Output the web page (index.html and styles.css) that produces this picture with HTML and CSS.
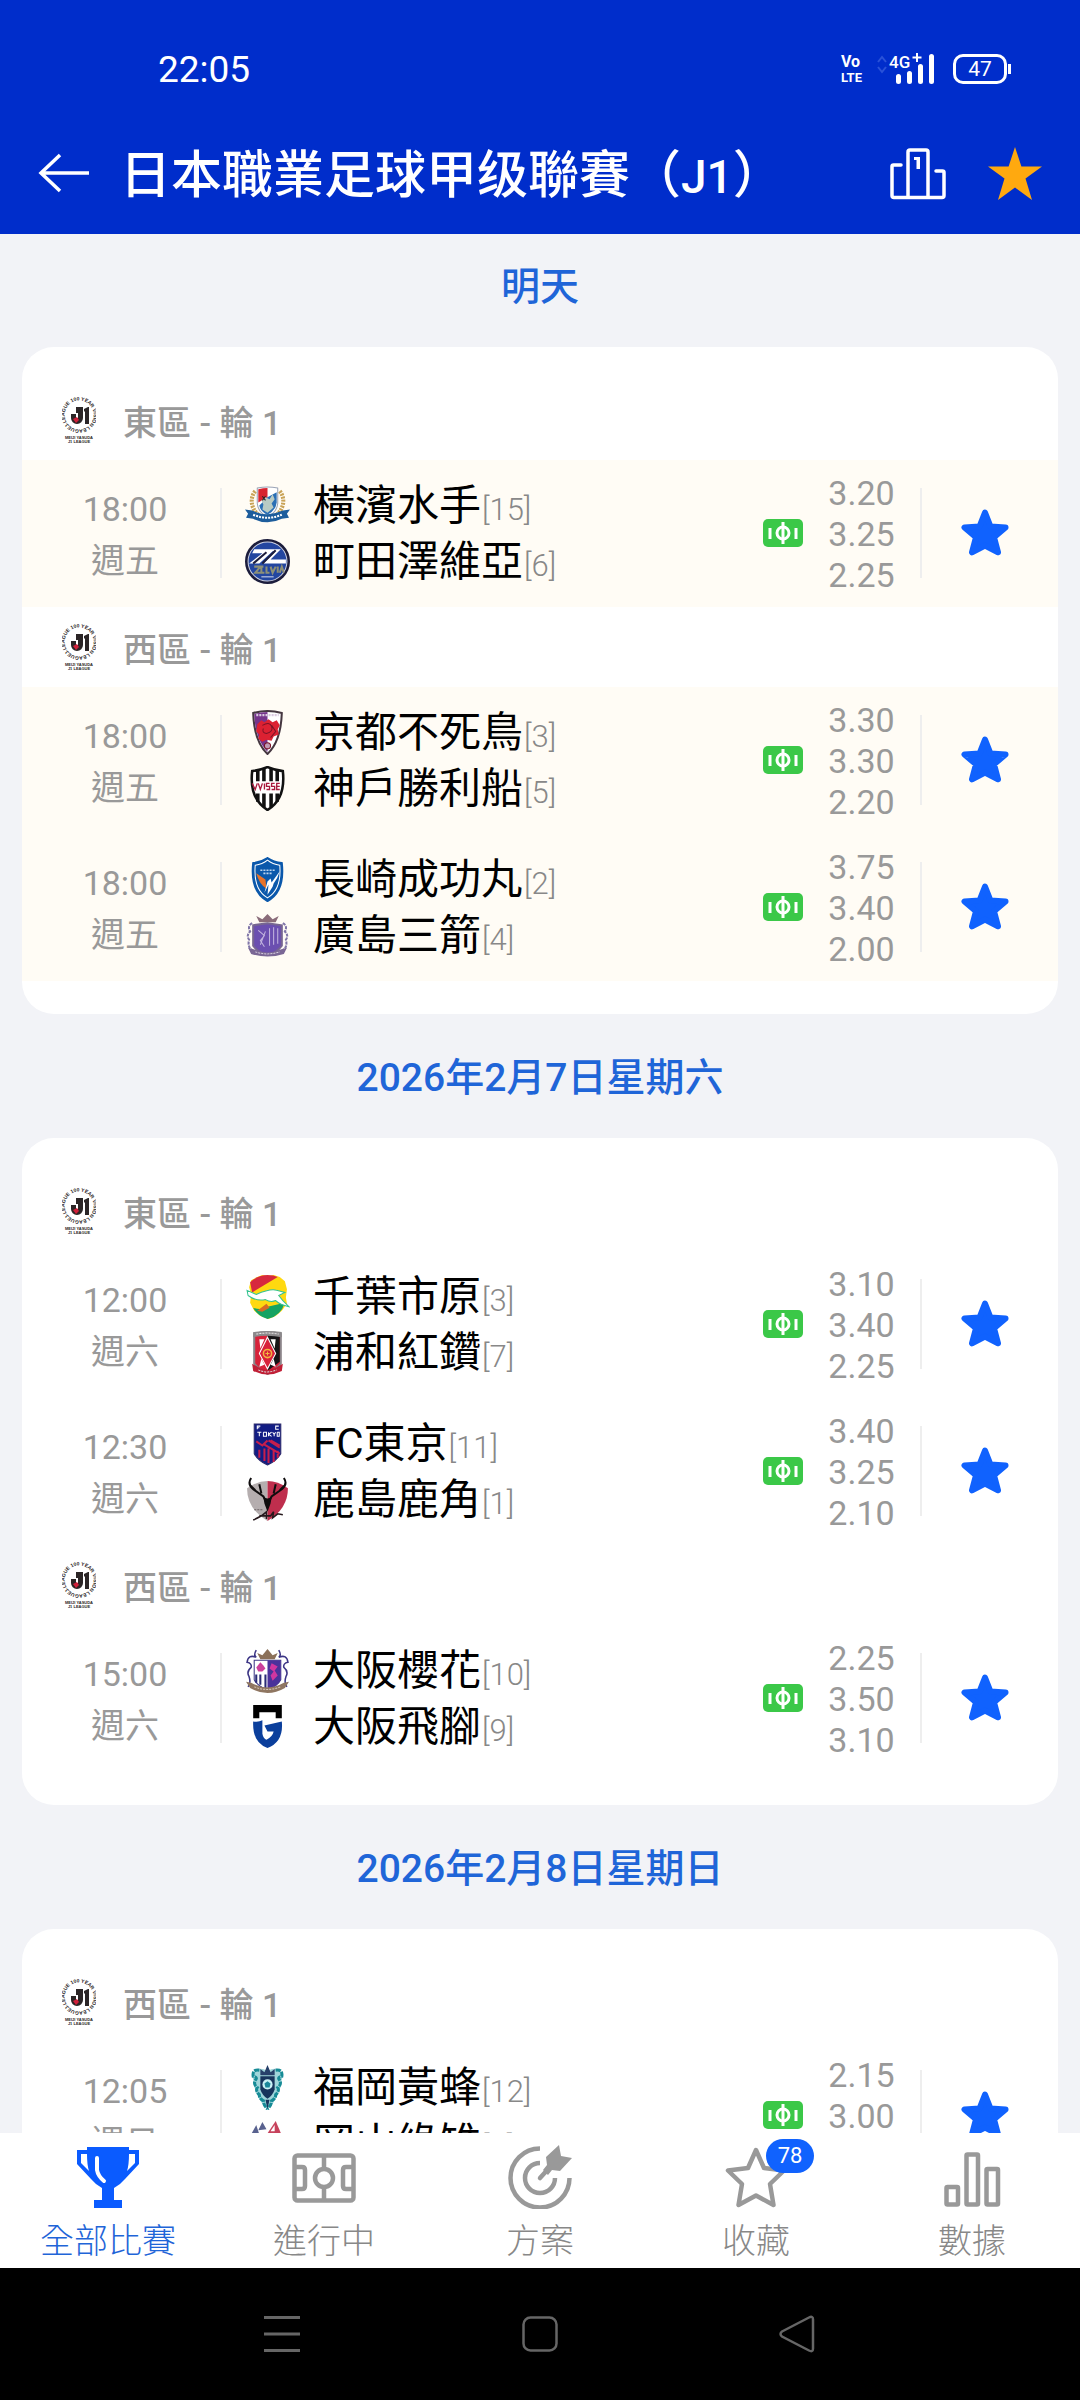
FILE: index.html
```html
<!DOCTYPE html>
<html lang="zh-Hant">
<head>
<meta charset="utf-8">
<meta name="viewport" content="width=device-width, initial-scale=1">
<title>日本職業足球甲级聯賽（J1）</title>
<link rel="stylesheet" href="styles.css">
</head>
<body>
<svg class="sprite" aria-hidden="true">
  <defs>
    <path id="ring" d="M7.200 29.500A14.500 14.500 0 1 1 27 29.500A14.500 14.500 0 0 1 7.200 29.500"/>
    <symbol id="league" viewBox="0 0 34 48">
      <text class="ring-text"><textPath href="#ring">J.LEAGUE 100 YEAR VISION LEAGUE</textPath></text>
      <path d="M14 11h7v11a6 6 0 0 1-12 0v-4h5v4h2v-5h-2z" fill="#2b2526"/>
      <path d="M22 13l4-2h1v17h-4V15l-1 1z" fill="#2b2526"/>
      <path d="M11 23l4-2 2 3-3 3z" fill="#d0203a"/>
      <text class="foot-text" x="17" y="43">MEIJI YASUDA</text>
      <text class="foot-text" x="17" y="47">J1 LEAGUE</text>
    </symbol>
    <symbol id="pitch" viewBox="0 0 40 28">
      <rect width="40" height="28" rx="5" fill="#3bc848"/>
      <g fill="none" stroke="#fff" stroke-width="3"><circle cx="20" cy="14" r="6"/><path d="M20 3v22M7 9v11M33 9v11"/></g>
    </symbol>
    <symbol id="star" viewBox="0 0 48 48">
      <path d="M24 3.500l5.500 14 15 1-11.500 9.800 4 15L24 36.500l-13 6.800 4-15L3.500 18.500l15-1z" fill="#1062fe" stroke="#1062fe" stroke-width="6" stroke-linejoin="round"/>
    </symbol>
    <symbol id="marinos" viewBox="0 0 44 44">
      <path d="M10 8C5 14 5 24 13 31M34 8c5 6 5 16-3 23" fill="none" stroke="#c9a357" stroke-width="4" stroke-dasharray="2 1"/>
      <path d="M12 5q10-2 20 0v15q-1 9-10 13-9-4-10-13z" fill="#fff" stroke="#9aa3b5"/>
      <path d="M13 6q5-1 9-1v9l-9 5z" fill="#d8242f"/><path d="M22 14l9-5v10q-1 8-9 12-7-3-8-9z" fill="#2b6fb5"/>
      <path d="M16 17l4-3 4 2 3-5 2 5-3 4 2 4-6 5-5-3 1-5z" fill="#b9cbc4"/><path d="M17 13l3 4m0-4l-3 4" stroke="#222"/>
      <path d="M0 26l7 1q15 7 30 0l7-1-3 4 2 4-7 1q-14 7-28 0l-7-1 2-4z" fill="#1d5d9c"/>
      <path d="M8 31q14 6 28 0" fill="none" stroke="#fff" stroke-width="2" stroke-dasharray="2 1"/>
    </symbol>
    <symbol id="zelvia" viewBox="0 0 44 44">
      <circle cx="22" cy="22" r="20.500" fill="#2346a0" stroke="#1c1d3c" stroke-width="3"/><circle cx="22" cy="22" r="19" fill="none" stroke="#cfd3e4"/>
      <path d="M9 10h26L25 20h15v4H18L30 12h-3L14 24H4l13-10H7z" fill="#fff"/>
      <path d="M17 24L30 11M8 24l13-11" stroke="#1c1d3c" stroke-width="2"/>
      <path d="M9 27h6l-5 6h6m2-6h-2v6h3m2-6v6h3m1-6l2 6 3-6m2 0v6m2 0l2-6 2 6" fill="none" stroke="#8d9077" stroke-width="2"/>
      <path d="M16 37h12" stroke="#d8dcec" stroke-width="1"/>
    </symbol>
    <symbol id="kyoto" viewBox="0 0 44 44">
      <path d="M8 3q14-4 28 0-1 28-14 40Q9 31 8 3z" fill="#fff" stroke="#453740" stroke-width="2"/>
      <path d="M9 4q7-2 13-2v39Q10 29 9 4z" fill="#75348b"/>
      <path d="M11 5h22" stroke="#d9c9df" stroke-width="2" stroke-dasharray="2 1"/>
      <path d="M12 14l4-4 3 2 4-3 4 3 4-2 3 5-2 4 1 5-5 2-2 4-5-1-4 2-4-3 1-4-3-3z" fill="#dc2132"/>
      <path d="M17 15q7-4 9 1t-5 7q-5-1-3-5m8-3l4 6-5 6" fill="none" stroke="#7b1426" stroke-width="1"/>
      <circle cx="22" cy="35" r="3" fill="#c09bb3" stroke="#7b1426"/>
    </symbol>
    <symbol id="vissel" viewBox="0 0 44 44">
      <path d="M7 5Q15 4 22 1q7 3 15 4 3 27-15 38Q4 32 7 5z" fill="#fff" stroke="#111" stroke-width="2.500"/>
      <path d="M12.500 5v10m6-12v12m7-12v12m6-10v10M12.500 27v8m6-8v13m7-13v13m6-13v8" stroke="#111" stroke-width="3.500"/>
      <path d="M7 17l3 6 2-6m1 0l2 6 2-6m2 0v6m5-6h-3v3h3v3h-3m8-6h-3v3h3v3h-3m8-6h-3v6h3m-3-3h3" fill="none" stroke="#a8193d" stroke-width="1.300"/>
    </symbol>
    <symbol id="nagasaki" viewBox="0 0 44 44">
      <path d="M8 6Q16 5 22 1q6 4 14 5 3 28-14 37Q5 34 8 6z" fill="#0b58ab" stroke="#0b58ab" stroke-width="2"/>
      <path d="M10 8q7-1 12-5 5 4 12 5 2 24-12 32Q8 32 10 8z" fill="none" stroke="#fff"/>
      <path d="M15 13h14M18 16h8" stroke="#bcd4ee" stroke-width="1.500" stroke-dasharray="2 1"/>
      <path d="M11 16l9 6 1 9q-7-4-10-15z" fill="#e8732a"/><path d="M34 14q-2 7-6 12l-1 3-5 8 1-10-4 8 3-11 3-3 1 4z" fill="#fff"/>
    </symbol>
    <symbol id="hiroshima" viewBox="0 0 44 44">
      <path d="M7 10q-5 3-2 8-4 4-1 8-2 8 4 11M37 10q5 3 2 8 4 4 1 8 2 8-4 11" fill="none" stroke="#8076a8" stroke-width="2" stroke-dasharray="3 1"/>
      <path d="M14 9l-3-6 6 3 5-5 5 5 6-3-3 6z" fill="#8a6c7a"/><path d="M8 12l14-2 14 2v20q-5 7-14 9-9-2-14-9z" fill="#6b4fb0" stroke="#776691" stroke-width="2"/>
      <path d="M13 17l6 5-4 5 4 6m5-18v17m4-18v17m4-16v15M20 18l-5 13" fill="none" stroke="#c3b5df" stroke-width="1"/>
      <path d="M3 34l7 2q12 5 24 0l7-2-3 6q-16 5-32 0z" fill="#7a6795"/><path d="M10 38q12 4 24 0" fill="none" stroke="#d7cede" stroke-dasharray="2 1"/>
    </symbol>
    <symbol id="chiba" viewBox="0 0 44 44">
      <path d="M6 6l6-3 5-2 5 1 6-1 6 2 5 4 2 8-1 8 1 6-5 7-6 5-7 3-8-3-6-5-4-8 1-8-2-7z" fill="#ffd910"/>
      <path d="M5 8q8-7 17-7 6 0 10 2L7 18z" fill="#d7293e"/><path d="M8 33q8 3 14-1l17-4q-4 13-17 16-10-3-14-11z" fill="#15a363"/><path d="M12 36l9-7 3 4-7 4z" fill="#d86b23"/>
      <path d="M2 16l9 4q14-6 20-4l8 2-6 3 4 5 6 6q-9-2-13-6-5 2-10-1-9 2-17-4z" fill="#fff" stroke="#35c390"/>
    </symbol>
    <symbol id="urawa" viewBox="0 0 44 44">
      <path d="M9 4q13-4 26 0v29q-5 6-13 10-8-4-13-10z" fill="#d8223a" stroke="#8b8489" stroke-width="2"/>
      <path d="M22 5h12v26l-12 9z" fill="#171517"/><path d="M14 9h5l-4 9zM25 9h5l-1 9z" fill="#fff"/><path d="M14 36l2-8 3 6zM30 36l-2-8-3 6z" fill="#fff"/>
      <path d="M22 7l8 16-8 15-8-15z" fill="#d8223a" stroke="#fff"/><circle cx="22" cy="23" r="4" fill="#d8223a" stroke="#f3b640" stroke-width="1.500"/><path d="M20 23h4m-2-2v4" stroke="#f3b640"/>
      <path d="M8 2q14-2 28 0v5q-14-3-28 0z" fill="#8c898b"/><path d="M11 4q11-2 22 0" fill="none" stroke="#e9e7e8" stroke-dasharray="2 1"/>
      <path d="M7 33l7 4q8 4 16 0l7-4-1 7q-14 7-28 0z" fill="#c01f36"/><path d="M13 39q9 4 18 0" stroke="#ddd" fill="none" stroke-dasharray="2 1"/>
    </symbol>
    <symbol id="tokyo" viewBox="0 0 44 44">
      <path d="M9 3h26v29q-4 7-13 11Q13 39 9 32z" fill="#121d84" stroke="#2c2a6c"/>
      <path d="M12 8V5h3m-3 1.500h2M33 5h-3v3h3" stroke="#fff" fill="none"/>
      <path d="M12 11h4m-2 0v4m4-4v4h3v-4h-3m5 0v4m3-4l-3 2 3 2m1-4l1.500 2 1.500-2m-1.500 2v2m3-4v4h2v-4h-2" fill="none" stroke="#fff"/>
      <path d="M11 20l6 4 5-5m1 0l11 7m-9-7l9 5m-15-1l15 9M14 36v-8m5 11V27m4 14V27m5 13V28m4 8v-7" fill="none" stroke="#c71e4c" stroke-width="2"/>
    </symbol>
    <symbol id="kashima" viewBox="0 0 44 44">
      <path d="M2 11q10-7 20-7v39Q2 31 2 11z" fill="#b5aeaf"/><path d="M42 11Q32 4 22 4v39q20-12 20-32z" fill="#bf2e4d"/>
      <path d="M6 1q-4 6 2 11l10 7 3 6M14 7l2 9M38 1q4 6-2 11l-10 7-3 6M30 7l-2 9M5 8l5 5M39 8l-5 5" fill="none" stroke="#0f0d0e" stroke-width="2"/>
      <path d="M18 20l4 1 4-1-1 6-3 8-3-8z" fill="#0f0d0e"/><path d="M8 42q8-3 13-8v7m-7-3h11l3-4-1 6 5-4 5 1" fill="none" stroke="#26181c" stroke-width="1.500"/><path d="M9 32h9" stroke="#6b6365" stroke-dasharray="2 1"/>
    </symbol>
    <symbol id="cerezo" viewBox="0 0 44 44">
      <path d="M11 2q-3 5 0 7-8-3-9 5 5 1 4 5-5 4-2 9 2 6-1 10M33 2q3 5 0 7 8-3 9 5-5 1-4 5 5 4 2 9-2 6 1 10" fill="none" stroke="#3c3585" stroke-width="1.500"/>
      <path d="M9 12h26v19q-3 6-13 10Q12 37 9 31z" fill="#fff" stroke="#3c3585"/>
      <path d="M22 12h13v19q-3 6-13 10z" fill="#4a329b"/><path d="M11 26v8m4-8v10m5-10v13" stroke="#2a2b76" stroke-width="2"/>
      <path d="M15 14l3 3 2 3-3 3h-4l-2-4z" fill="#cc3f9b"/><path d="M26 15l6 3-3 4 3 5-5 5-2-5 3-4-4-3z" fill="#d036a0"/>
      <path d="M15 11l-3-6 5 2 5-6 5 6 5-2-3 6z" fill="#8b7059"/><path d="M1 33l5 1q16 9 32 0l5-1-4 6q-17 10-34 0z" fill="#8f7661"/><path d="M9 38q13 5 26 0" fill="none" stroke="#d8c8b8" stroke-dasharray="2 1"/>
    </symbol>
    <symbol id="gamba" viewBox="0 0 44 44">
      <path d="M8 1h28v13h-6V8H14v6H8z" fill="#000"/>
      <path d="M8 17q5 1 9-1v13q1 5 4 6 6-3 7-8h-6l-3-6 17-4q2 20-14 26Q7 38 8 17z" fill="#0b3f9c"/>
    </symbol>
    <symbol id="fukuoka" viewBox="0 0 44 44">
      <path d="M22 6q8-5 14 1 2 2 0 7-1 16-14 30Q9 30 8 14q-2-5 0-7 6-6 14-1z" fill="#9fd5da"/>
      <path d="M14 5q-7-1-6 6 5 1 2 4-2 4 2 7-2 3 2 7 0 4 4 6 0 4 4 8M30 5q7-1 6 6-5 1-2 4 2 4-2 7 2 3-2 7 0 4-4 6 0 4-4 8" fill="none" stroke="#168b96" stroke-width="3" stroke-dasharray="5 1"/>
      <path d="M15 11h14v13q-2 6-7 9-5-3-7-9z" fill="#17345c"/><circle cx="22" cy="19" r="5" fill="#c9f1f5"/><path d="M22 16l3 2-1 4h-4l-1-4z" fill="#1a879a"/>
      <path d="M15 4l4 3 3-7 3 7 4-3v6H15z" fill="#27406a"/><path d="M20 34h4l-2 9z" fill="#17345c"/>
    </symbol>
    <symbol id="okayama" viewBox="0 0 44 44">
      <path d="M13 9L17 1l4 7zM6 13l5-9 3 9z" fill="#59628f"/><path d="M22 12L30 0l6 14z" fill="#c7425c"/><path d="M25 10l4-6v6" fill="#fff"/>
      <path d="M10 13h26v16L22 43 10 29z" fill="#8e2749"/>
    </symbol>
  </defs>
</svg>

<header class="top">
  <div class="status">
    <span class="clock">22:05</span>
    <div class="status-icons">
      <span class="volte"><span>Vo</span><span>LTE</span></span>
      <svg width="60" height="32" viewBox="0 0 60 32" role="img" aria-label="4G+">
        <path d="M2 9l4-5 4 5M2 14l4 5 4-5" fill="none" stroke="#2a52d8" stroke-width="2"/>
        <text class="net" x="13" y="15">4G</text>
        <path d="M41 0v9M36.500 4.500h9" stroke="#fff" stroke-width="2"/>
        <path d="M22.500 23.500v5M33.500 20.500v8M44.500 13.500v15M55.500 3.500v25" stroke="#fff" stroke-width="5" stroke-linecap="round"/>
      </svg>
      <span class="battery">47</span>
    </div>
  </div>
  <div class="bar">
    <button class="icon-btn" type="button" aria-label="返回">
      <svg width="52" height="44" viewBox="0 0 52 44"><path d="M22 3L3 21l19 18M3 21h48" fill="none" stroke="#fff" stroke-width="3.500"/></svg>
    </button>
    <h1 class="title">日本職業足球甲级聯賽（<span class="code">J1</span>）</h1>
    <button class="icon-btn" type="button" aria-label="積分榜">
      <svg width="56" height="52" viewBox="0 0 56 52"><g fill="none" stroke="#fff" stroke-width="3.500" stroke-linejoin="round" stroke-linecap="round"><path d="M11 17H3.500q-1.500 0-1.500 1.500v29q0 2 2 2h48q2 0 2-2v-23q0-1.500-1.500-1.500H46"/><path d="M18 49V4q0-2 2-2h16q2 0 2 2v45"/></g><path d="M24 9h6v12h-3.500v-9H24z" fill="#fff"/></svg>
    </button>
    <button class="icon-btn" type="button" aria-label="取消收藏">
      <svg width="54" height="54" viewBox="0 0 54 54"><path d="M27 0l6.400 19.500H54L37.500 31.500 44 53 27 40.500 10 53l6.500-21.500L0 19.500h20.600z" fill="#ffa90f"/></svg>
    </button>
  </div>
</header>

<main class="feed">
  <section class="day">
    <h2 class="date">明天</h2>
    <div class="card">
      <h3 class="group"><svg class="league"><use href="#league"/></svg>東區 - 輪 1</h3>
      <article class="match soon">
        <div class="when"><time>18:00</time><span>週五</span></div>
        <div class="teams">
          <div class="team"><svg class="crest"><use href="#marinos"/></svg><p>橫濱水手<span class="rank">[15]</span></p></div>
          <div class="team"><svg class="crest"><use href="#zelvia"/></svg><p>町田澤維亞<span class="rank">[6]</span></p></div>
        </div>
        <svg class="pitch"><use href="#pitch"/></svg>
        <div class="odds"><span>3.20</span><span>3.25</span><span>2.25</span></div>
        <button class="fav" type="button" aria-label="收藏"><svg><use href="#star"/></svg></button>
      </article>
      <h3 class="group"><svg class="league"><use href="#league"/></svg>西區 - 輪 1</h3>
      <article class="match soon">
        <div class="when"><time>18:00</time><span>週五</span></div>
        <div class="teams">
          <div class="team"><svg class="crest"><use href="#kyoto"/></svg><p>京都不死鳥<span class="rank">[3]</span></p></div>
          <div class="team"><svg class="crest"><use href="#vissel"/></svg><p>神戶勝利船<span class="rank">[5]</span></p></div>
        </div>
        <svg class="pitch"><use href="#pitch"/></svg>
        <div class="odds"><span>3.30</span><span>3.30</span><span>2.20</span></div>
        <button class="fav" type="button" aria-label="收藏"><svg><use href="#star"/></svg></button>
      </article>
      <article class="match soon">
        <div class="when"><time>18:00</time><span>週五</span></div>
        <div class="teams">
          <div class="team"><svg class="crest"><use href="#nagasaki"/></svg><p>長崎成功丸<span class="rank">[2]</span></p></div>
          <div class="team"><svg class="crest"><use href="#hiroshima"/></svg><p>廣島三箭<span class="rank">[4]</span></p></div>
        </div>
        <svg class="pitch"><use href="#pitch"/></svg>
        <div class="odds"><span>3.75</span><span>3.40</span><span>2.00</span></div>
        <button class="fav" type="button" aria-label="收藏"><svg><use href="#star"/></svg></button>
      </article>
    </div>
  </section>

  <section class="day">
    <h2 class="date">2026年2月7日星期六</h2>
    <div class="card">
      <h3 class="group"><svg class="league"><use href="#league"/></svg>東區 - 輪 1</h3>
      <article class="match">
        <div class="when"><time>12:00</time><span>週六</span></div>
        <div class="teams">
          <div class="team"><svg class="crest"><use href="#chiba"/></svg><p>千葉市原<span class="rank">[3]</span></p></div>
          <div class="team"><svg class="crest"><use href="#urawa"/></svg><p>浦和紅鑽<span class="rank">[7]</span></p></div>
        </div>
        <svg class="pitch"><use href="#pitch"/></svg>
        <div class="odds"><span>3.10</span><span>3.40</span><span>2.25</span></div>
        <button class="fav" type="button" aria-label="收藏"><svg><use href="#star"/></svg></button>
      </article>
      <article class="match">
        <div class="when"><time>12:30</time><span>週六</span></div>
        <div class="teams">
          <div class="team"><svg class="crest"><use href="#tokyo"/></svg><p>FC東京<span class="rank">[11]</span></p></div>
          <div class="team"><svg class="crest"><use href="#kashima"/></svg><p>鹿島鹿角<span class="rank">[1]</span></p></div>
        </div>
        <svg class="pitch"><use href="#pitch"/></svg>
        <div class="odds"><span>3.40</span><span>3.25</span><span>2.10</span></div>
        <button class="fav" type="button" aria-label="收藏"><svg><use href="#star"/></svg></button>
      </article>
      <h3 class="group"><svg class="league"><use href="#league"/></svg>西區 - 輪 1</h3>
      <article class="match">
        <div class="when"><time>15:00</time><span>週六</span></div>
        <div class="teams">
          <div class="team"><svg class="crest"><use href="#cerezo"/></svg><p>大阪櫻花<span class="rank">[10]</span></p></div>
          <div class="team"><svg class="crest"><use href="#gamba"/></svg><p>大阪飛腳<span class="rank">[9]</span></p></div>
        </div>
        <svg class="pitch"><use href="#pitch"/></svg>
        <div class="odds"><span>2.25</span><span>3.50</span><span>3.10</span></div>
        <button class="fav" type="button" aria-label="收藏"><svg><use href="#star"/></svg></button>
      </article>
    </div>
  </section>

  <section class="day">
    <h2 class="date">2026年2月8日星期日</h2>
    <div class="card">
      <h3 class="group"><svg class="league"><use href="#league"/></svg>西區 - 輪 1</h3>
      <article class="match">
        <div class="when"><time>12:05</time><span>週日</span></div>
        <div class="teams">
          <div class="team"><svg class="crest"><use href="#fukuoka"/></svg><p>福岡黃蜂<span class="rank">[12]</span></p></div>
          <div class="team"><svg class="crest"><use href="#okayama"/></svg><p>岡山綠雉<span class="rank">[8]</span></p></div>
        </div>
        <svg class="pitch"><use href="#pitch"/></svg>
        <div class="odds"><span>2.15</span><span>3.00</span></div>
        <button class="fav" type="button" aria-label="收藏"><svg><use href="#star"/></svg></button>
      </article>
    </div>
  </section>
</main>

<nav class="tabs">
  <a class="tab active" href="#">
    <svg class="tab-icon" viewBox="0 0 64 64"><path d="M11 2h42v3h10v14L49 34q-4 5-11 9v12h8v8H18v-8h8V43q-7-4-11-9L1 19V5h10zM11 9H5v9l8 8q-2-6-2-17zm42 0q0 11-2 17l8-8V9z" fill="#0a5bff"/><path d="M21 13v12q1 6 7 11" fill="none" stroke="#fff" stroke-width="4" stroke-linecap="round"/></svg>
    <span>全部比賽</span>
  </a>
  <a class="tab" href="#">
    <svg class="tab-icon" viewBox="0 0 64 64"><g fill="none" stroke="#999" stroke-width="4.500"><rect x="2.500" y="10.500" width="59" height="45" rx="3"/><circle cx="32" cy="33" r="9"/><path d="M32 10v14m0 18v14M3 22h7q3 0 3 3v16q0 3-3 3H3M61 22h-7q-3 0-3 3v16q0 3 3 3h7"/></g></svg>
    <span>進行中</span>
  </a>
  <a class="tab" href="#">
    <svg class="tab-icon" viewBox="0 0 64 64"><g fill="none" stroke="#999" stroke-width="4.500"><path d="M32 3.500A29.500 29.500 0 1 0 61.500 33"/><path d="M32 18A15 15 0 1 0 47 33"/><path d="M32 33l10-11" stroke-linecap="round"/></g><path d="M38 12L51 0l2 11 11 2-12 13-8-1-4 5-5-5 4-5z" fill="#999"/></svg>
    <span>方案</span>
  </a>
  <a class="tab" href="#">
    <svg class="tab-icon" viewBox="0 0 64 64"><path d="M32 5l8 18 20 2.500-14 13.500 3.500 21L32 50.500 14.500 60 18 39 4 25.500 24 23z" fill="none" stroke="#999" stroke-width="4.500" stroke-linejoin="round"/></svg>
    <b class="badge">78</b>
    <span>收藏</span>
  </a>
  <a class="tab" href="#">
    <svg class="tab-icon" viewBox="0 0 64 64"><g fill="none" stroke="#999" stroke-width="4.500"><rect x="6.500" y="42" width="11.500" height="17.500" rx="1"/><rect x="26.500" y="9.500" width="11.500" height="50" rx="1"/><rect x="46.500" y="24" width="11.500" height="35.500" rx="1"/></g></svg>
    <span>數據</span>
  </a>
</nav>

<footer class="system">
  <button class="icon-btn" type="button" aria-label="最近任務"><svg width="38" height="38" viewBox="0 0 38 38"><path d="M1 2.500h36M1 19h36M1 35.500h36" stroke="#666" stroke-width="3"/></svg></button>
  <button class="icon-btn" type="button" aria-label="主畫面"><svg width="38" height="38" viewBox="0 0 38 38"><rect x="2.500" y="2.500" width="33" height="33" rx="7" fill="none" stroke="#666" stroke-width="2.500"/></svg></button>
  <button class="icon-btn" type="button" aria-label="返回"><svg width="38" height="38" viewBox="0 0 38 38"><path d="M3 16.500L30 2.500q4-2 4 2v29q0 4-4 2L3 21.500q-3-2.500 0-5z" fill="none" stroke="#666" stroke-width="2.500"/></svg></button>
</footer>
</body>
</html>
```
FILE: styles.css
```css
* {
  box-sizing: border-box;
}

body {
  margin: 0;
  height: 100vh;
  display: flex;
  flex-direction: column;
  background: #f2f3f7;
  font-family: Roboto, "Noto Sans CJK TC", sans-serif;
  color: #000;
}

h1, h2, h3, p {
  margin: 0;
  font-weight: 500;
}

button {
  border: 0;
  padding: 0;
  background: none;
  font: inherit;
  cursor: pointer;
}

svg {
  display: block;
  flex: none;
}

.sprite {
  position: absolute;
  width: 0;
  height: 0;
}

.ring-text {
  font: 700 5px "Liberation Sans", sans-serif;
  fill: #2b2526;
}

.foot-text {
  font: 700 4px "Liberation Sans", sans-serif;
  fill: #2b2526;
  text-anchor: middle;
}

/* Header */
.top {
  flex: none;
  background: #002dcb;
  color: #fff;
}

.status {
  display: flex;
  align-items: center;
  justify-content: space-between;
  height: 138px;
  padding: 0 69px 0 158px;
}

.clock {
  font-size: 37px;
}

.status-icons {
  display: flex;
  align-items: center;
  gap: 13px;
}

.volte {
  display: flex;
  flex-direction: column;
  width: 22px;
  font: 700 16px/17px Roboto, sans-serif;
}

.volte span:last-child {
  font-size: 13px;
  line-height: 15px;
}

.net {
  font: 500 17px Roboto, sans-serif;
  fill: #fff;
}

.battery {
  position: relative;
  width: 54px;
  height: 30px;
  margin: 0 4px;
  border: 3px solid #fff;
  border-radius: 10px;
  font-size: 21px;
  line-height: 24px;
  text-align: center;
}

.battery::after {
  content: "";
  position: absolute;
  top: 7px;
  right: -7px;
  width: 3px;
  height: 10px;
  background: #fff;
}

.bar {
  display: flex;
  align-items: center;
  gap: 42px;
  height: 96px;
  padding: 0 38px 24px;
}

.title {
  flex: 1;
  margin-left: -12px;
  padding-top: 4px;
  font-size: 51px;
  line-height: 68px;
  white-space: nowrap;
}

.code {
  font-size: 46px;
}

/* Match list */
.feed {
  flex: 1;
  min-height: 0;
  overflow: hidden;
  padding: 0 22px;
}

.day + .day {
  padding-top: 11px;
}

.date {
  padding: 29px 0 36px;
  font-size: 39px;
  line-height: 48px;
  text-align: center;
  color: #1f65d8;
}

.card {
  padding: 33px 0;
  border-radius: 32px;
  background: #fff;
}

.group {
  display: flex;
  align-items: center;
  gap: 27px;
  height: 80px;
  padding-left: 40px;
  font-size: 34px;
  color: #999;
}

.league {
  width: 34px;
  height: 48px;
}

.match {
  display: grid;
  grid-template-columns: 200px 1fr 40px 117px 138px;
  height: 147px;
  padding-top: 17px;
  color: #999;
  font-size: 34px;
}

.match.soon {
  background: #fffcf5;
}

.when {
  display: flex;
  flex-direction: column;
  align-items: center;
  height: 90px;
  margin-top: 11px;
  padding-left: 8px;
  border-right: 2px solid #eee;
  line-height: 52px;
}

.when time {
  margin-top: -5px;
}

.teams {
  padding-left: 23px;
}

.team {
  display: flex;
  align-items: center;
  gap: 23px;
  height: 56px;
}

.team p {
  padding-top: 6px;
  font-size: 42px;
  font-weight: 400;
  line-height: 56px;
  color: #000;
  white-space: nowrap;
}

.crest {
  width: 45px;
  height: 45px;
}

.rank {
  padding-left: 1px;
  font-size: 31px;
  font-weight: 300;
  color: #888;
}

.pitch {
  width: 40px;
  height: 28px;
  margin-top: 42px;
}

.odds {
  display: flex;
  flex-direction: column;
  height: 123px;
  margin-top: -4px;
  line-height: 41px;
  text-align: center;
}

.fav {
  display: flex;
  align-items: center;
  justify-content: center;
  height: 90px;
  margin-top: 11px;
  padding-right: 10px;
  border-left: 2px solid #eee;
}

.fav svg {
  width: 48px;
  height: 48px;
}

/* Tabs */
.tabs {
  flex: none;
  display: grid;
  grid-template-columns: repeat(5, 1fr);
  height: 135px;
  background: #fff;
}

.tab {
  position: relative;
  display: flex;
  flex-direction: column;
  align-items: center;
  padding-top: 12px;
  font-size: 34px;
  font-weight: 300;
  line-height: 50px;
  color: #888;
  text-decoration: none;
}

.tab span {
  margin-top: 7px;
}

.tab.active {
  color: #1f65d8;
}

.tab-icon {
  width: 64px;
  height: 64px;
}

.badge {
  position: absolute;
  top: 6px;
  left: calc(50% + 10px);
  width: 48px;
  height: 34px;
  border-radius: 17px;
  background: #1062fe;
  color: #fff;
  font-size: 22px;
  font-weight: 400;
  line-height: 34px;
  text-align: center;
}

/* System navigation */
.system {
  flex: none;
  display: flex;
  align-items: center;
  justify-content: center;
  gap: 220px;
  height: 132px;
  background: #000;
}
```
